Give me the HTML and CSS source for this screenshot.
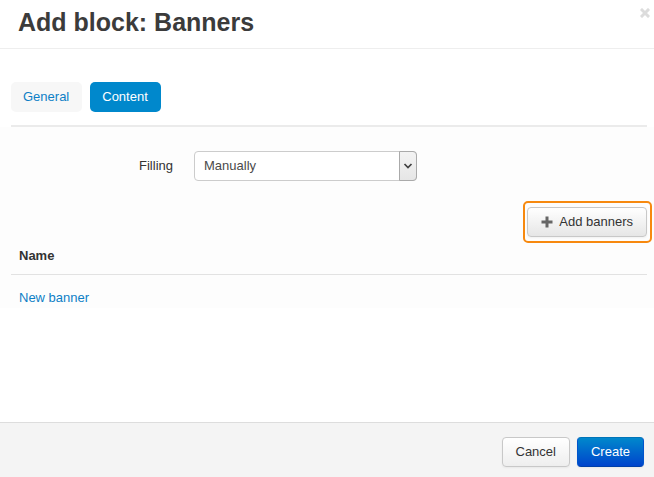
FILE: index.html
```
<!DOCTYPE html>
<html lang="en">
<head>
<meta charset="utf-8">
<title>Add block: Banners</title>
<link rel="stylesheet" href="styles.css">
</head>
<body>
<form class="dialog">
  <header class="dialog-header">
    <h1>Add block: Banners</h1>
    <button class="close" type="button" aria-label="Close">
      <svg viewBox="0 0 10 10" width="10" height="10"><path d="M2 2L8 8M8 2L2 8" stroke="#dcdcdc" stroke-width="3" stroke-linecap="square"/></svg>
    </button>
  </header>
  <main class="dialog-body">
    <nav class="tabs">
      <a class="tab" href="#general">General</a>
      <a class="tab active" href="#content">Content</a>
    </nav>
    <section class="panel">
      <div class="field">
        <label for="filling">Filling</label>
        <div class="select-wrap">
          <select id="filling"><option>Manually</option></select>
          <span class="arrow"><svg viewBox="0 0 10 8" width="10" height="8"><path d="M1.5 2L5 5.5L8.500 2" fill="none" stroke="#404040" stroke-width="1.7"/></svg></span>
        </div>
      </div>
      <div class="toolbar">
        <div class="highlight">
          <button class="btn" type="button">
            <svg viewBox="0 0 12 12" width="12" height="12"><path d="M6 0.500V11.500M0.500 6H11.500" stroke="#666" stroke-width="3"/></svg>Add banners</button>
        </div>
      </div>
      <table class="list">
        <thead><tr><th>Name</th></tr></thead>
        <tbody><tr><td><a href="#banner">New banner</a></td></tr></tbody>
      </table>
    </section>
  </main>
  <footer class="dialog-footer">
    <button class="btn" type="button">Cancel</button>
    <button class="btn primary" type="submit">Create</button>
  </footer>
</form>
</body>
</html>
```
FILE: styles.css
```
* {
  box-sizing: border-box;
}

body {
  margin: 0;
  background: #fff;
  color: #333;
  font: 13px/20px "Liberation Sans", Arial, sans-serif;
}

a {
  color: #0e7fc6;
  text-decoration: none;
}

.dialog {
  display: flex;
  flex-direction: column;
  min-height: 100vh;
}

.dialog-header {
  display: flex;
  justify-content: space-between;
  align-items: flex-start;
  padding: 7px 4px 10px 18px;
  border-bottom: 1px solid #eee;
}

h1 {
  margin: 0;
  color: #3b3b3b;
  font-size: 25px;
  line-height: 31px;
}

.close {
  display: flex;
  padding: 1px 0 0;
  border: 0;
  background: none;
}

.dialog-body {
  flex: 1;
  padding: 33px 7px 0 11px;
}

.tabs {
  display: flex;
  gap: 8px;
  padding-bottom: 13px;
  border-bottom: 2px solid #ebebeb;
}

.tab {
  padding: 5px 13px 5px 12px;
  border-radius: 5px;
  background: #f7f7f7;
}

.tab.active {
  background: #0088cc;
  color: #fff;
}

.panel {
  margin: 0 -7px 0 -11px;
  padding: 24px 7px 0 11px;
  background: #fdfdfd;
}

.field {
  display: flex;
  align-items: center;
  gap: 21px;
}

.field label {
  width: 162px;
  text-align: right;
}

.select-wrap {
  display: grid;
  grid-template-columns: 1fr 18px;
  width: 223px;
  height: 30px;
}

select {
  grid-area: 1 / 1 / 2 / 3;
  appearance: none;
  padding: 0 9px;
  border: 1px solid #ccc;
  border-radius: 4px;
  background: #fff;
  color: #4a4a4a;
  font: inherit;
}

.arrow {
  grid-area: 1 / 2;
  display: flex;
  align-items: center;
  justify-content: center;
  border: 1px solid #aaa;
  border-radius: 0 4px 4px 0;
  background: linear-gradient(#f3f3f3, #e6e6e6);
  pointer-events: none;
  z-index: 1;
}

.toolbar {
  display: flex;
  justify-content: flex-end;
  margin: 20px -5px 0 0;
}

.highlight {
  padding: 4px 3px 4px 2px;
  border: 2px solid #f7890f;
  border-radius: 5px;
}

.btn {
  display: flex;
  align-items: center;
  gap: 6px;
  height: 30px;
  padding: 0 13px;
  border: 1px solid #c8c8c8;
  border-radius: 4px;
  background: linear-gradient(#fff, #e6e6e6);
  box-shadow: 0 1px 2px #0000000d;
  color: #333;
  font: inherit;
}

.dialog-footer .btn {
  background: linear-gradient(#fff, #eee);
}

.dialog-footer .primary {
  border-color: #0074b8 #0055cc #003fa8;
  background: linear-gradient(#0088cc, #0044cc);
  color: #fff;
}

.list {
  width: 100%;
  border-collapse: collapse;
}

.list th,
.list td {
  padding: 3px 8px 8px;
  text-align: left;
}

.list th {
  border-bottom: 1px solid #e2e2e2;
}

.list td {
  padding: 13px 8px 0;
}

.dialog-footer {
  display: flex;
  justify-content: flex-end;
  gap: 7px;
  padding: 14px 10px 10px;
  border-top: 1px solid #ddd;
  background: #f4f4f4;
}
```
